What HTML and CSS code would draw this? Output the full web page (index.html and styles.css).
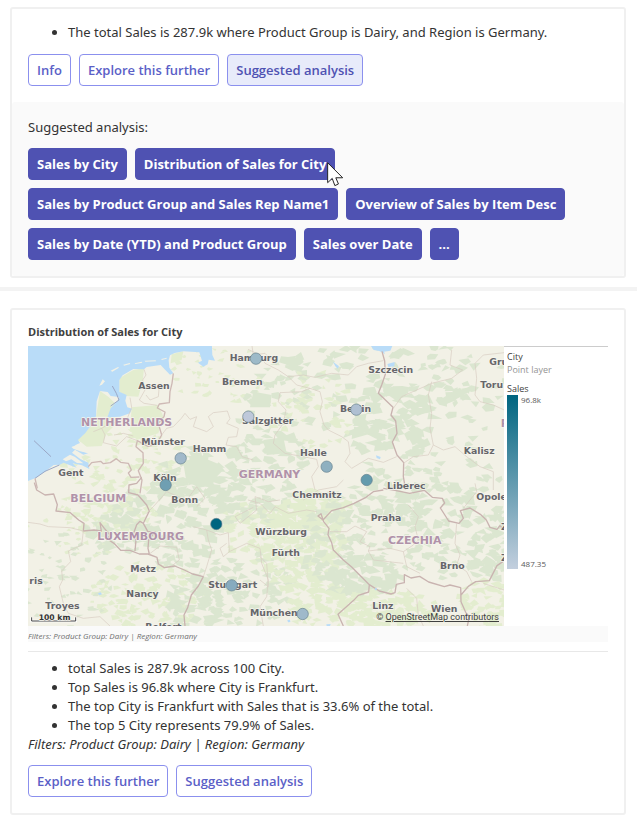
FILE: index.html
```html
<!DOCTYPE html>
<html lang="en">
<head>
<meta charset="utf-8">
<meta name="viewport" content="width=device-width, initial-scale=1">
<title>Sales insights</title>
<link rel="stylesheet" href="styles.css">
</head>
<body>
<main>
  <section class="card">
    <div class="card-body">
      <ul class="facts">
        <li>The total Sales is 287.9k where Product Group is Dairy, and Region is Germany.</li>
      </ul>
      <div class="actions">
        <button class="btn" type="button">Info</button>
        <button class="btn" type="button">Explore this further</button>
        <button class="btn btn-active" type="button">Suggested analysis</button>
      </div>
    </div>
    <div class="suggestions">
      <p class="suggestions-label">Suggested analysis:</p>
      <div class="actions">
        <button class="btn btn-solid" type="button">Sales by City</button>
        <span class="pointed">
          <button class="btn btn-solid" type="button">Distribution of Sales for City</button>
          <svg class="cursor" viewBox="-2 -2 52 76" aria-hidden="true"><path d="M0 0V61L14 48L22 70L33 65L25 46H46Z" fill="#fff" stroke="#222" stroke-width="3"/></svg>
        </span>
        <button class="btn btn-solid" type="button">Sales by Product Group and Sales Rep Name1</button>
        <button class="btn btn-solid" type="button">Overview of Sales by Item Desc</button>
        <button class="btn btn-solid" type="button">Sales by Date (YTD) and Product Group</button>
        <button class="btn btn-solid" type="button">Sales over Date</button>
        <button class="btn btn-solid" type="button">...</button>
      </div>
    </div>
  </section>

  <hr class="divider">

  <section class="card card-chart">
    <h2 class="chart-title">Distribution of Sales for City</h2>
    <div class="chart">
      <div class="map">
        <svg class="map-drawing" viewBox="0 0 1428 840" role="img" aria-label="Map of sales by city">
          <rect width="1428" height="840" fill="#f2f1e6"/>
          <g id="terrain"></g>
          <g transform="translate(-24 -78)">
            <path class="meadow" d="M298 175L340 150L372 145L368 185L355 230L320 228L298 215ZM240 213L265 230L285 250L262 290L228 290ZM228 300L270 290L300 300L260 340L245 378L200 380L175 360ZM335 262L415 255L430 290L415 340L350 360L330 330ZM455 103L490 94L485 120L452 130Z"/>
            <path class="wood" d="M490 430L530 405L590 430L610 450L560 500L500 490ZM700 215L755 225L750 262L690 262ZM730 360L790 352L800 400L740 405Z"/>
            <path class="water" d="M0 60H575L577 105L585 122L566 119L563 133L550 140L534 128L546 122L538 97L490 94L464 99L450 106L446 121L448 143L460 160L450 164L436 150L422 135L380 141L372 148L340 147L308 166L298 180V215L320 225L316 242L322 262L336 266L330 280L300 290L262 292L272 265L294 241L297 231L272 228L263 216L240 213L230 244L228 289L214 315L196 339L174 360L180 369L165 376L182 392L204 400L190 404L165 389L156 398L182 418L205 428L208 447L186 436L158 430L170 443L148 435L131 428L119 434L101 435L75 455L45 475L24 483H0Z"/>
            <path class="island" d="M238 197L248 178L255 184L246 194ZM272 152L294 141L297 143L277 155ZM310 134L329 129L331 132L312 137ZM344 130L365 125L367 128L346 132ZM374 122L407 121L408 124L376 125ZM424 117L440 113L440 116L425 120ZM128 418L150 404L164 410L190 430L171 429L154 418L138 424ZM154 381L172 374L193 389L221 388L207 400L180 394L160 386Z"/>
            <path class="sea-line" d="M42 362L93 410M277 198L289 220L297 240L272 258M45 475L75 454L118 435"/>
            <path class="border" d="M460 160L456 190L450 215L448 248L418 252L412 264L435 276L432 290L415 310L425 345L410 372L384 379L352 362L348 380L369 398L370 430L355 452L366 480L360 520M205 440L215 428L242 424L250 431L271 428L289 416L302 427L325 430L334 450L325 459L333 472L358 471M45 475L52 505"/>
            <path class="state" d="M372 148L378 165L368 180L375 210L358 240L372 250L412 256M330 233L335 262L320 300L270 310L245 325L255 345L250 368L290 378L320 350L352 362M245 325L220 335M425 345L440 325L460 320L484 295L495 280L510 298L530 290L520 320L560 335L580 320L565 290L580 278L622 273L630 296L620 310L655 325L650 350L625 352L618 375L650 380L666 410L700 420M418 196L415 230L390 240L378 225M282 345L310 340L340 348M696 78L700 105L735 100L770 135"/>
          </g>
          <g transform="translate(696 -18)">
            <path class="water" d="M333 18H397L391 32L372 35L375 42L358 33L341 30ZM219 65L237 79L233 86L226 79ZM348 346L362 351L360 358L350 354ZM382 72L404 66L403 79L385 81Z"/>
            <path class="border border-main" d="M366 34L374 63L376 103L365 135L355 160L399 202L393 225L407 243L411 280L397 306L411 345L431 368L430 410L437 450"/>
            <path class="state" d="M-36 28L0 45L15 70L55 90L85 110L130 105L165 112L215 100L265 105L290 80L325 70L370 62M85 110L110 135L150 145L180 155L187 185L180 215L192 255L205 270L245 290L265 305L270 340L255 365L275 385L325 355L370 367L410 350M150 145L125 155L60 158L55 185L78 210L70 250L45 285L40 310L75 340L130 350L170 358L175 380L155 410L165 450M400 205L425 170L470 150L515 130L575 115L608 90L570 75L575 30M515 125L505 165L515 220L510 265L520 315L505 345L460 350L430 370M733 38L670 45L645 70L650 115L645 165L660 185L700 195L733 210M520 315L550 330L585 320L620 350L660 380L700 395L700 450"/>
          </g>
          <g transform="translate(-24 402)">
            <path class="border border-main" d="M43 8L50 30L75 45L101 42L112 74L108 93L151 98L176 120L192 130L190 153L222 150L244 153L240 128L253 145L270 165L262 177L282 190L302 211L330 211L358 222L388 222L384 205L386 180L405 155L383 154L370 130L388 93L380 75L354 45L326 38L327 15L350 10L365 -8M384 222L411 232L415 252L433 263L464 258L493 270L518 282L550 290L535 318L514 345L503 383L492 405L495 438M345 213L348 180L339 165L350 134L360 124L370 130"/>
            <path class="state" d="M24 127L60 132L85 140L150 143L190 153L185 195L145 213L152 245L125 273L128 300L118 320L130 370L145 400L190 415L240 410L270 438M530 80L555 55L530 20L500 60L440 35L400 80L380 100M388 222L420 198L470 202L478 240L455 258M520 140L560 150L565 180L575 210L560 260L550 290M560 150L600 165L625 158L628 215L610 230L600 205L620 190M628 215L680 190L720 205L725 250L745 300L740 350L720 380L730 438M780 60L745 65L705 50L710 90L660 130L645 110L700 82"/>
            <path class="water" d="M234 340L242 337L246 343L238 346Z"/>
          </g>
          <g transform="translate(696 402)">
            <path class="border border-main" d="M370 30L340 35L318 52L282 70L250 83L215 92L189 120L174 108L183 101L191 125L207 145L204 164L215 188L220 210L250 240L275 261L328 314L358 333L393 342L405 338L409 313L433 308L433 284L453 294L479 289L506 306L553 320L570 315L602 323L603 345L625 319L647 305L688 302L711 257L733 242M370 25L405 31L449 40L493 31L517 52L547 55L554 69L541 84L566 123L597 130L610 115L601 92L630 84L661 103L679 120L690 142L711 148L720 137L733 151M328 314L326 336L295 346L281 361L234 403L250 438M602 323L603 365L617 397L628 410L622 438"/>
            <path class="state" d="M-36 60L0 70L30 100L45 80L85 100L140 90L170 95M210 155L260 155L285 138L320 155L300 185L330 200L325 213L390 205L430 215L460 195L475 180L465 140L475 110L445 75M430 215L440 260L480 280M325 213L340 240L430 250M590 130L585 190L600 225L590 255L620 275L635 305M130 60L175 30L230 20L250 0M0 300L25 320L20 250L0 230M610 85L650 35L645 10M440 325L470 355L475 405L490 438M733 330L700 320L670 310"/>
            <path class="water" d="M82 420L90 419L91 426L84 427ZM199 433L212 432L210 438H200ZM345 325L350 324L350 330L345 331Z"/>
          </g>

          <g class="country">
            <text x="159" y="240">NETHERLANDS</text>
            <text x="632" y="396">GERMANY</text>
            <text x="127" y="468">BELGIUM</text>
            <text x="208" y="583">LUXEMBOURG</text>
            <text x="1080" y="594">CZECHIA</text>
            <text x="1418" y="244">P</text>
          </g>
          <g class="city">
            <text x="605" y="46">Hamburg</text>
            <text x="582" y="117">Bremen</text>
            <text x="642" y="233">Salzgitter</text>
            <text x="331" y="129">Assen</text>
            <text x="340" y="296">Münster</text>
            <text x="494" y="319">Hamm</text>
            <text x="91" y="390">Gent</text>
            <text x="376" y="405">Köln</text>
            <text x="1021" y="81">Szczecin</text>
            <text x="936" y="198">Berlin</text>
            <text x="1307" y="325">Kalisz</text>
            <text x="816" y="330">Halle</text>
            <text x="1077" y="430">Liberec</text>
            <text x="1384" y="56">Gru</text>
            <text x="1357" y="126">Toru</text>
            <text x="430" y="472">Bonn</text>
            <text x="307" y="677">Metz</text>
            <text x="295" y="752">Nancy</text>
            <text x="4" y="714">ris</text>
            <text x="52" y="790">Troyes</text>
            <text x="541" y="725">Stuttgart</text>
            <text x="352" y="852">Belfort</text>
            <text x="682" y="567">Würzburg</text>
            <text x="666" y="810">München</text>
            <text x="793" y="457">Chemnitz</text>
            <text x="1028" y="524">Praha</text>
            <text x="1236" y="668">Brno</text>
            <text x="1033" y="788">Linz</text>
            <text x="1209" y="799">Wien</text>
            <text x="1345" y="463">Opole</text>
            <text x="731" y="629">Fürth</text>
            <text x="1419" y="552">Z</text>
            <text x="1419" y="645">Z</text>
          </g>

          <g class="points">
            <circle cx="684" cy="38" r="17" fill="#9dbac8"/>
            <circle cx="661" cy="212" r="17" fill="#bec8da"/>
            <circle cx="458" cy="337" r="17" fill="#a1b8ca"/>
            <circle cx="413" cy="417" r="17" fill="#6f9fb2"/>
            <circle cx="985" cy="191" r="17" fill="#afc0d2"/>
            <circle cx="896" cy="362" r="17" fill="#8eb0c0"/>
            <circle cx="1016" cy="402" r="17" fill="#639bad"/>
            <circle cx="565" cy="534" r="17" fill="#006580"/>
            <circle cx="611" cy="718" r="17" fill="#87abbf"/>
            <circle cx="824" cy="804" r="17" fill="#9fb9ca"/>
          </g>
          <path d="M11 814V825H143V814" fill="none" stroke="#fff" stroke-width="8"/>
          <path d="M11 814V825H143V814" fill="none" stroke="#444" stroke-width="3"/>
          <text class="scale" x="32" y="823">100 km</text>
        </svg>
        <p class="attribution">© <a href="#osm">OpenStreetMap contributors</a></p>
      </div>
      <aside class="legend">
        <p class="legend-layer">City</p>
        <p class="legend-kind">Point layer</p>
        <p class="legend-measure">Sales</p>
        <div class="legend-scale">
          <div class="legend-bar"></div>
          <div class="legend-values"><span>96.8k</span><span>487.35</span></div>
        </div>
      </aside>
    </div>
    <p class="chart-footer">Filters: Product Group: Dairy | Region: Germany</p>
    <div class="insight">
      <ul class="facts">
        <li>total Sales is 287.9k across 100 City.</li>
        <li>Top Sales is 96.8k where City is Frankfurt.</li>
        <li>The top City is Frankfurt with Sales that is 33.6% of the total.</li>
        <li>The top 5 City represents 79.9% of Sales.</li>
      </ul>
      <p class="filters">Filters: Product Group: Dairy | Region: Germany</p>
      <div class="actions">
        <button class="btn" type="button">Explore this further</button>
        <button class="btn" type="button">Suggested analysis</button>
      </div>
    </div>
  </section>
</main>
<script src="terrain.js"></script>
</body>
</html>
```
FILE: styles.css
```css
* {
  box-sizing: border-box;
}

body {
  margin: 0;
  background: #fff;
  color: #333;
  font-family: "Noto Sans", "Open Sans", sans-serif;
  font-size: 13px;
  line-height: 19px;
}

main {
  padding: 7px 0 8px;
}

p,
h2,
ul {
  margin: 0;
}

.card {
  margin: 0 11px 0 10px;
  border: 2px solid #f0f0f0;
  border-radius: 3px;
}

.card-body {
  padding: 14px 16px 16px;
}

.facts {
  padding-left: 40px;
}

.actions {
  display: flex;
  flex-wrap: wrap;
  gap: 8px;
  margin-top: 12px;
}

.btn {
  height: 32px;
  padding: 0 8px;
  border: 1px solid #8b90ee;
  border-radius: 4px;
  background: #fff;
  color: #5b5fc7;
  font: inherit;
  font-family: "Open Sans", "Noto Sans", sans-serif;
  font-weight: 600;
  white-space: nowrap;
}

.btn-active {
  background: #e8ebfa;
  color: #4f52b2;
}

.btn-solid {
  border-color: #4f52b2;
  background: #4f52b2;
  color: #fff;
  font-weight: 700;
}

.pointed {
  position: relative;
  display: inline-flex;
}

.cursor {
  position: absolute;
  top: 14px;
  right: -9px;
  width: 17px;
  height: 25px;
}

.suggestions {
  padding: 16px;
  border-radius: 3px;
  background: #fafafa;
}

.suggestions .actions {
  margin-top: 11px;
}

.divider {
  height: 4px;
  margin: 9px 0 17px;
  border: 0;
  background: #f3f3f3;
}

.card-chart {
  padding: 13px 16px 16px;
}

.chart-title {
  margin-bottom: 5px;
  color: #404040;
  font-family: "Open Sans", "Noto Sans", sans-serif;
  font-size: 11px;
  font-weight: 700;
  line-height: 18px;
}

.chart {
  display: grid;
  grid-template-columns: 1fr 104px;
  border-top: 1px solid #ccc;
}

.map {
  position: relative;
  margin-top: -1px;
}

.map-drawing {
  display: block;
  width: 100%;
}

.wood {
  fill: #dbe6d0;
}

.meadow {
  fill: #e3edcf;
}

.water {
  fill: #b9dcf8;
}

.island {
  fill: #f2f1e6;
}

.sea-line {
  fill: none;
  stroke: #9ba8c6;
  stroke-width: 3;
}

.border,
.state {
  fill: none;
  stroke: #ceb9b5;
  stroke-linejoin: round;
}

.border {
  stroke-width: 4;
}

.border-main {
  stroke: #c9b3b0;
}

.state {
  stroke: #d8cbc1;
  stroke-width: 2;
}

.city,
.country,
.scale {
  font-family: "DejaVu Sans", sans-serif;
  font-weight: 700;
}

.city {
  fill: #66666a;
  font-size: 28px;
}

.country {
  fill: #b092a9;
  font-size: 33px;
}

.city text,
.country text,
.scale {
  paint-order: stroke;
  stroke: #f6f5ee;
  stroke-width: 4px;
  stroke-linejoin: round;
}

.scale {
  fill: #333;
  font-size: 23px;
}

.points circle {
  stroke: #65808c;
  stroke-width: 2;
}

.attribution {
  position: absolute;
  right: 5px;
  bottom: 3px;
  color: #404040;
  font-family: Roboto, sans-serif;
  font-size: 9px;
  line-height: 12px;
}

.attribution a {
  color: inherit;
}

.legend {
  padding: 3px 0 0 3px;
  color: #404040;
  font-family: "Open Sans", "Noto Sans", sans-serif;
  font-size: 9px;
  line-height: 13px;
}

.legend-kind {
  color: #949494;
}

.legend-measure {
  margin-top: 6px;
}

.legend-scale {
  display: flex;
  gap: 3px;
  height: 174px;
}

.legend-bar {
  width: 11px;
  background: linear-gradient(#006580, #c3cfde);
}

.legend-values {
  display: flex;
  flex-direction: column;
  justify-content: space-between;
  color: #595959;
  font-size: 8px;
  line-height: 10px;
}

.chart-footer {
  padding-top: 4px;
  background: #fafafa;
  color: #6e6e6e;
  font-family: "Open Sans", "Noto Sans", sans-serif;
  font-size: 8px;
  font-style: italic;
  line-height: 12px;
}

.insight {
  margin-top: 9px;
  padding-top: 7px;
  border-top: 1px solid #e8e8e8;
}

.insight .actions {
  margin-top: 11px;
}

.filters {
  font-style: italic;
}
```
FILE: terrain.js
```js
// Scatters angular patches of woodland and meadow over the land.
const terrain = document.getElementById("terrain");

// Each area: centre x, centre y, radius x, radius y, patch count, patch size, class.
const areas = [
  [1000, 130, 330, 130, 110, 22, "wood"],
  [1090, 230, 130, 120, 60, 28, "wood"],
  [1290, 100, 150, 120, 30, 22, "wood"],
  [1300, 330, 160, 120, 26, 18, "wood"],
  [580, 90, 150, 90, 50, 12, "meadow"],
  [730, 200, 100, 120, 36, 18, "wood"],
  [280, 340, 200, 100, 100, 16, "meadow"],
  [530, 380, 150, 90, 66, 24, "wood"],
  [720, 350, 130, 90, 46, 22, "wood"],
  [440, 500, 180, 110, 110, 24, "wood"],
  [250, 510, 140, 60, 60, 16, "meadow"],
  [280, 560, 110, 60, 50, 22, "wood"],
  [460, 620, 90, 50, 34, 20, "wood"],
  [360, 750, 180, 100, 110, 17, "meadow"],
  [500, 780, 80, 90, 60, 22, "wood"],
  [120, 700, 150, 150, 60, 14, "wood"],
  [150, 540, 150, 100, 40, 12, "meadow"],
  [680, 560, 120, 90, 90, 18, "meadow"],
  [680, 460, 130, 70, 50, 20, "wood"],
  [650, 730, 150, 110, 100, 18, "wood"],
  [840, 620, 130, 130, 180, 20, "meadow"],
  [850, 500, 120, 70, 100, 22, "meadow"],
  [900, 600, 90, 120, 44, 18, "wood"],
  [1000, 690, 120, 60, 70, 24, "wood"],
  [1030, 480, 180, 60, 60, 20, "wood"],
  [1040, 560, 150, 80, 44, 18, "wood"],
  [1230, 490, 110, 90, 56, 24, "wood"],
  [1260, 640, 150, 60, 44, 18, "wood"],
  [1390, 600, 60, 130, 44, 24, "wood"],
  [1080, 790, 150, 60, 100, 20, "meadow"],
  [1380, 770, 80, 80, 60, 18, "meadow"],
  [900, 790, 120, 60, 70, 18, "meadow"],
  [1140, 380, 130, 70, 36, 20, "wood"],
  [850, 190, 130, 120, 50, 16, "meadow"]
];

let seed = 7;
function random() {
  seed = (seed * 16807) % 2147483647;
  return seed / 2147483647;
}

for (const [cx, cy, rx, ry, count, size, kind] of areas) {
  let d = "";
  for (let i = 0; i < count; i++) {
    const turn = random() * Math.PI * 2;
    const reach = Math.sqrt(random());
    const x = cx + Math.cos(turn) * rx * reach;
    const y = cy + Math.sin(turn) * ry * reach;
    const corners = 3 + Math.floor(random() * 3);
    const start = random() * 6;
    for (let k = 0; k < corners; k++) {
      const angle = start + (k / corners) * Math.PI * 2;
      const r = size * (0.35 + random() * 0.9);
      const px = Math.round(x + Math.cos(angle) * r);
      const py = Math.round(y + Math.sin(angle) * r * 0.6);
      d += (k ? "L" : "M") + px + " " + py;
    }
    d += "Z";
  }
  const patch = document.createElementNS("http://www.w3.org/2000/svg", "path");
  patch.setAttribute("d", d);
  patch.setAttribute("class", kind);
  terrain.appendChild(patch);
}
```
